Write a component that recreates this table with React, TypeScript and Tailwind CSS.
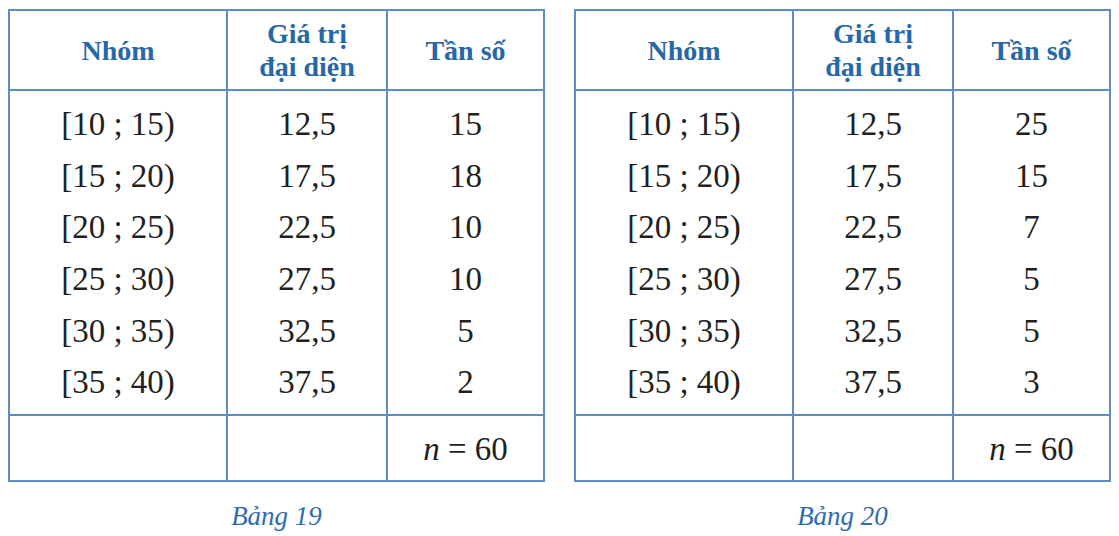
import React from 'react';

type Table = {
  caption: string;
  rows: { group: string; mid: string; freq: string }[];
};

const tables: Table[] = [
  {
    caption: 'Bảng 19',
    rows: [
      { group: '[10 ; 15)', mid: '12,5', freq: '15' },
      { group: '[15 ; 20)', mid: '17,5', freq: '18' },
      { group: '[20 ; 25)', mid: '22,5', freq: '10' },
      { group: '[25 ; 30)', mid: '27,5', freq: '10' },
      { group: '[30 ; 35)', mid: '32,5', freq: '5' },
      { group: '[35 ; 40)', mid: '37,5', freq: '2' },
    ],
  },
  {
    caption: 'Bảng 20',
    rows: [
      { group: '[10 ; 15)', mid: '12,5', freq: '25' },
      { group: '[15 ; 20)', mid: '17,5', freq: '15' },
      { group: '[20 ; 25)', mid: '22,5', freq: '7' },
      { group: '[25 ; 30)', mid: '27,5', freq: '5' },
      { group: '[30 ; 35)', mid: '32,5', freq: '5' },
      { group: '[35 ; 40)', mid: '37,5', freq: '3' },
    ],
  },
];

const FrequencyTable = ({ table }: { table: Table }) => {
  const cols = [
    table.rows.map((r) => r.group),
    table.rows.map((r) => r.mid),
    table.rows.map((r) => r.freq),
  ];

  return (
    <div className="w-[537px]">
      <div className="border-2 border-[#5b8ec5]">
        {/* Header */}
        <div className="grid grid-cols-[218px_160px_1fr] h-[80px] border-b-2 border-[#5b8ec5] text-[28px] leading-[33px] font-bold text-[#2667a8]">
          <div className="flex items-center justify-center border-r-2 border-[#5b8ec5]">Nhóm</div>
          <div className="flex flex-col items-center justify-center border-r-2 border-[#5b8ec5]">
            <span>Giá trị</span>
            <span>đại diện</span>
          </div>
          <div className="flex items-center justify-center">Tần số</div>
        </div>

        {/* Data rows */}
        <div className="grid grid-cols-[218px_160px_1fr] text-[33px] leading-[51.67px] text-[#231f20]">
          {cols.map((col, i) => (
            <div
              key={i}
              className={`flex flex-col items-center pt-[8px] pb-[5px] ${i < 2 ? 'border-r-2 border-[#5b8ec5]' : ''}`}
            >
              {col.map((v, j) => (
                <span key={j} className="h-[51.67px]">{v}</span>
              ))}
            </div>
          ))}
        </div>

        {/* Total */}
        <div className="grid grid-cols-[218px_160px_1fr] h-[66px] border-t-2 border-[#5b8ec5] text-[33px] text-[#231f20]">
          <div className="border-r-2 border-[#5b8ec5]" />
          <div className="border-r-2 border-[#5b8ec5]" />
          <div className="flex items-center justify-center pt-[4px]">
            <span><i>n</i> = 60</span>
          </div>
        </div>
      </div>
      <p className="mt-[17px] text-center text-[27px] leading-[34px] italic text-[#2f6cae]">{table.caption}</p>
    </div>
  );
};

export default function App() {
  return (
    <div className="w-[1119px] h-[536px] bg-white pt-[9px] pl-[8px] flex gap-[29px] [font-family:Liberation_Serif,serif]">
      {tables.map((t) => (
        <FrequencyTable key={t.caption} table={t} />
      ))}
    </div>
  );
}
